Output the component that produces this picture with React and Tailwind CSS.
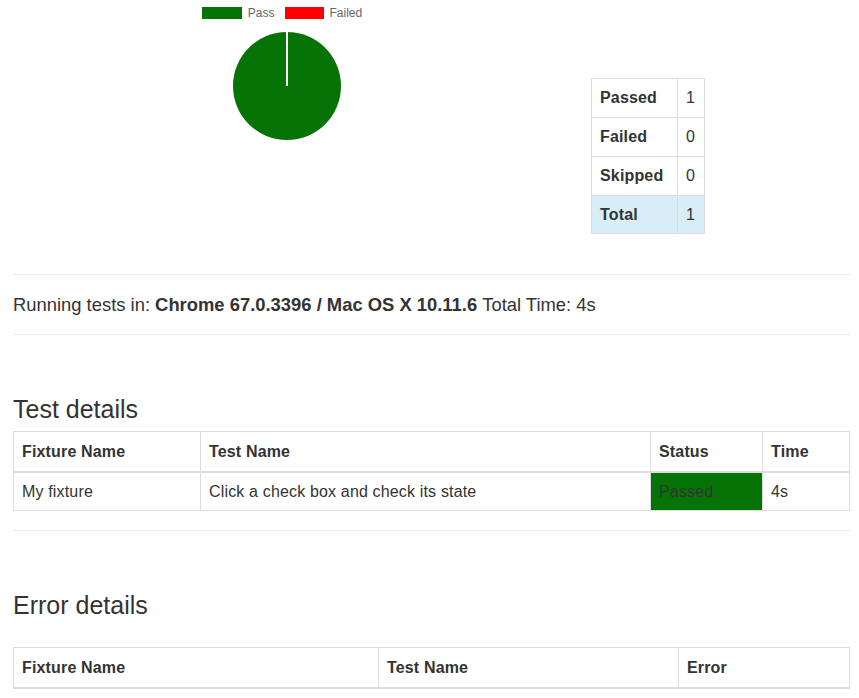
import React from "react";

const summary = [
  { label: "Passed", value: 1 },
  { label: "Failed", value: 0 },
  { label: "Skipped", value: 0 },
];

const PieChart = () => (
  <svg width="110" height="110" viewBox="0 0 110 110">
    <circle cx="55" cy="55" r="54" fill="#067306" />
    <line x1="55" y1="1" x2="55" y2="55" stroke="#fff" strokeWidth="2" />
  </svg>
);

const App = () => {
  return (
    <div className="min-h-[698px] bg-white px-[13px] pr-[9px] font-['Liberation_Sans',Arial,sans-serif] text-[16px] text-[#333]">
      {/* chart + summary */}
      <div className="flex h-[274px]">
        <div className="flex w-[548px] flex-col items-center">
          <div className="mt-[7px] mr-[10px] flex items-center gap-[6px] text-[12px] leading-[12px] text-[#666]">
            <span className="h-[12px] w-[40px] bg-[#067306]" />
            <span>Pass</span>
            <span className="ml-[4px] h-[12px] w-[39px] bg-[#ff0000]" />
            <span>Failed</span>
          </div>
          <div className="mt-[12px]">
            <PieChart />
          </div>
        </div>
        <table className="ml-[30px] mt-[78px] h-fit border-collapse border border-[#ddd] tracking-[0.01em]">
          <tbody>
            {summary.map((row) => (
              <tr key={row.label} className="h-[39px]">
                <td className="w-[86px] border border-[#ddd] px-[8px] font-bold">{row.label}</td>
                <td className="w-[27px] border border-[#ddd] px-[8px]">{row.value}</td>
              </tr>
            ))}
            <tr className="h-[38px] bg-[#d9edf7]">
              <td className="border border-[#ddd] px-[8px] font-bold">Total</td>
              <td className="border border-[#ddd] px-[8px]">1</td>
            </tr>
          </tbody>
        </table>
      </div>

      <div className="border-t border-[#eee]" />
      <p className="flex h-[59px] items-center pt-[1px] text-[18.4px]">
        Running tests in:&nbsp;<b>Chrome 67.0.3396 / Mac OS X 10.11.6</b>&nbsp;Total Time: 4s
      </p>
      <div className="border-t border-[#eee]" />

      {/* test details */}
      <h2 className="mt-[61px] mb-[9px] text-[25px] leading-[26px] font-medium">Test details</h2>
      <table className="w-full border-collapse border border-[#ddd] text-left tracking-[0.01em]">
        <thead>
          <tr className="h-[40px]">
            <th className="w-[187px] border border-b-2 border-[#ddd] px-[8px] pt-[2px]">Fixture Name</th>
            <th className="w-[450px] border border-b-2 border-[#ddd] px-[8px] pt-[2px]">Test Name</th>
            <th className="w-[112px] border border-b-2 border-[#ddd] px-[8px] pt-[2px]">Status</th>
            <th className="border border-b-2 border-[#ddd] px-[8px] pt-[2px]">Time</th>
          </tr>
        </thead>
        <tbody>
          <tr className="h-[39px]">
            <td className="border border-[#ddd] px-[8px] pt-[2px]">My fixture</td>
            <td className="border border-[#ddd] px-[8px] pt-[2px]">Click a check box and check its state</td>
            <td className="border border-[#ddd] bg-[#067306] px-[8px] pt-[2px]">Passed</td>
            <td className="border border-[#ddd] px-[8px] pt-[2px]">4s</td>
          </tr>
        </tbody>
      </table>

      <div className="mt-[19px] border-t border-[#eee]" />

      {/* error details */}
      <h2 className="mt-[61px] mb-[29px] text-[25px] leading-[26px] font-medium">Error details</h2>
      <table className="w-full border-collapse border border-[#ddd] text-left tracking-[0.01em]">
        <thead>
          <tr className="h-[40px]">
            <th className="w-[365px] border border-b-2 border-[#ddd] px-[8px] pt-[2px]">Fixture Name</th>
            <th className="w-[300px] border border-b-2 border-[#ddd] px-[8px] pt-[2px]">Test Name</th>
            <th className="border border-b-2 border-[#ddd] px-[8px] pt-[2px]">Error</th>
          </tr>
        </thead>
      </table>
    </div>
  );
};

export default App;
